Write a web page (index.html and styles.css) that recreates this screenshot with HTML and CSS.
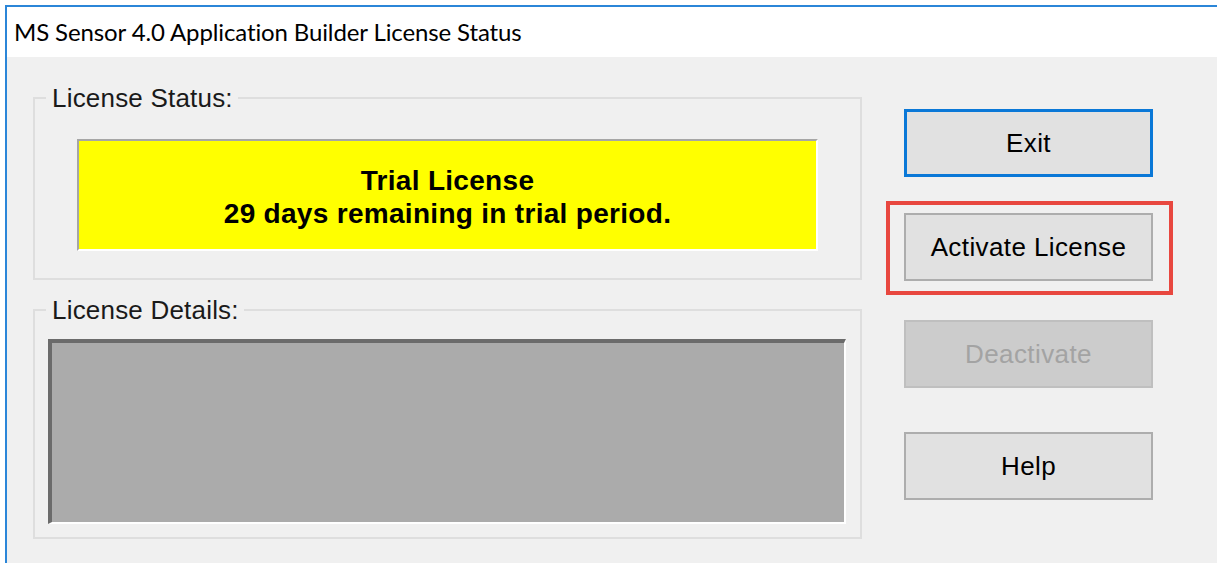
FILE: index.html
```html
<!DOCTYPE html>
<html lang="en">
<head>
<meta charset="utf-8">
<title>MS Sensor 4.0 Application Builder License Status</title>
<link rel="stylesheet" href="styles.css">
</head>
<body>
<div class="window">
  <div class="titlebar">MS Sensor 4.0 Application Builder License Status</div>
  <div class="client">
    <div class="groups">
      <fieldset class="group group-status">
        <legend>License Status:</legend>
        <div class="status-box">
          <div>Trial License</div>
          <div>29 days remaining in trial period.</div>
        </div>
      </fieldset>
      <fieldset class="group group-details">
        <legend>License Details:</legend>
        <div class="details-box"></div>
      </fieldset>
    </div>
    <div class="actions">
      <button class="btn btn-default btn-exit" type="button">Exit</button>
      <div class="highlight">
        <button class="btn" type="button">Activate License</button>
      </div>
      <button class="btn btn-disabled" type="button" disabled>Deactivate</button>
      <button class="btn btn-help" type="button">Help</button>
    </div>
  </div>
</div>
</body>
</html>
```
FILE: styles.css
```css
html, body {
  margin: 0;
  padding: 0;
  background: #ffffff;
}

body {
  width: 1217px;
  height: 563px;
  overflow: hidden;
}

.window {
  margin: 5px 0 0 5px;
  height: 558px;
  box-sizing: border-box;
  border-top: 2px solid #2b86d8;
  border-left: 2px solid #2b86d8;
  background: #f0f0f0;
}

.titlebar {
  height: 50px;
  box-sizing: border-box;
  padding: 10px 0 0 7px;
  background: #ffffff;
  font-family: "Lato", "Open Sans", sans-serif;
  font-size: 24px;
  letter-spacing: -0.12px;
  line-height: 30px;
  color: #000000;
}

.client {
  display: flex;
  padding: 26px 0 0 26px;
  font-family: "Liberation Sans", Arial, sans-serif;
  color: #000000;
}

.groups {
  display: flex;
  flex-direction: column;
  gap: 15px;
  width: 829px;
}

.group {
  margin: 0;
  border: 2px solid #dedede;
  min-width: 0;
}

.group legend {
  padding: 0 5px 0 6px;
  font-size: 26px;
  letter-spacing: 0.2px;
  line-height: 30px;
  color: #1a1a1a;
}

.group-status {
  padding: 26px 42px 27px 42px;
}

.group-status legend {
  margin-left: -31px;
}

.group-details {
  padding: 14px 14px 13px 13px;
}

.group-details legend {
  margin-left: -2px;
}

.status-box {
  height: 112px;
  box-sizing: border-box;
  display: flex;
  flex-direction: column;
  justify-content: center;
  align-items: center;
  padding-top: 3px;
  background: #ffff00;
  border-top: 2px solid #a6a6a6;
  border-left: 2px solid #a6a6a6;
  border-right: 2px solid #ffffff;
  border-bottom: 2px solid #ffffff;
  font-weight: bold;
  font-size: 28px;
  letter-spacing: 0.3px;
  line-height: 33px;
  color: #000000;
}

.details-box {
  height: 185px;
  box-sizing: border-box;
  background: #ababab;
  border-top: 4px solid #6b6b6b;
  border-left: 4px solid #6b6b6b;
  border-right: 2px solid #ffffff;
  border-bottom: 2px solid #ffffff;
}

.actions {
  display: flex;
  flex-direction: column;
  align-items: flex-start;
  margin-left: 42px;
  padding-top: 26px;
}

.btn {
  width: 249px;
  height: 68px;
  margin: 0;
  padding: 0;
  box-sizing: border-box;
  background: #e1e1e1;
  border: 2px solid #adadad;
  border-radius: 0;
  font-family: "Liberation Sans", Arial, sans-serif;
  font-size: 26px;
  letter-spacing: 0.4px;
  color: #000000;
}

.btn-default {
  border: 3px solid #0a78d7;
}

.highlight {
  margin: 24px 0 0 -18px;
  padding: 8px 16px 10px 14px;
  border: 4px solid #e8473f;
}

.btn-disabled {
  margin-top: 25px;
  background: #cccccc;
  border-color: #bfbfbf;
  color: #a3a3a3;
}

.btn-help {
  margin-top: 44px;
}
```
